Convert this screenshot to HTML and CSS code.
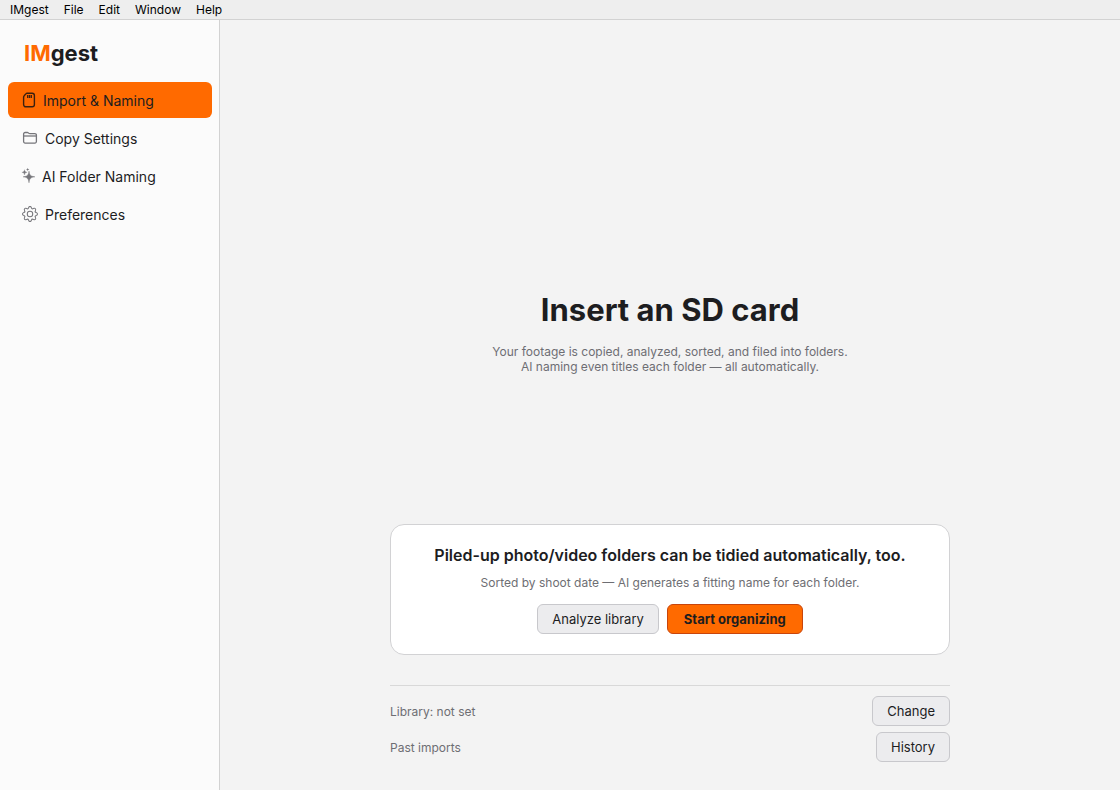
FILE: index.html
```html
<!DOCTYPE html>
<html lang="en">
<head>
  <meta charset="UTF-8" />
  <meta name="viewport" content="width=device-width, initial-scale=1.0"/>
  <title>IMgest</title>
  <link rel="stylesheet" href="styles.css">
</head>
<body>

<!-- Menu bar -->
<header class="menubar">
  <button type="button">IMgest</button>
  <button type="button">File</button>
  <button type="button">Edit</button>
  <button type="button">Window</button>
  <button type="button">Help</button>
</header>

<div class="app">

  <!-- Sidebar -->
  <aside class="sidebar">
    <div class="logo"><span>IM</span>gest</div>
    <nav class="nav">
      <a class="nav-item active" href="#import">
        <svg width="14" height="16" viewBox="0 0 14 16" fill="none" stroke="currentColor" stroke-width="1.4">
          <path d="M5.2 1.2h5a2.200 2.200 0 0 1 2.200 2.200v9.200a2.200 2.200 0 0 1-2.200 2.200H3.800a2.200 2.200 0 0 1-2.200-2.200V5.200c0-.6.2-1 .6-1.400l1.600-1.900c.4-.5.800-.7 1.400-.7z"/>
          <path d="M5.700 3v3M7.500 3v3M9.300 3v3" stroke-width="1.300"/>
        </svg>
        Import &amp; Naming
      </a>
      <a class="nav-item" href="#copy">
        <svg width="16" height="16" viewBox="0 0 16 16" fill="none" stroke="currentColor" stroke-width="1.300">
          <path d="M1.600 11.600V4a1.500 1.500 0 0 1 1.500-1.500h2.200c.5 0 .8.100 1.100.4l.5.400c.3.200.6.300 1 .3h5a1.500 1.500 0 0 1 1.500 1.500v6.500a1.500 1.500 0 0 1-1.500 1.500H3.100a1.500 1.500 0 0 1-1.500-1.500z"/>
          <path d="M1.600 6h12.800"/>
        </svg>
        Copy Settings
      </a>
      <a class="nav-item" href="#ai">
        <svg width="13" height="16" viewBox="0 0 13 16" fill="currentColor">
          <path d="M7 3.200c.5 3.900 1.600 5.100 5.800 5.600-4.200.6-5.300 1.800-5.800 5.900-.5-4.100-1.600-5.300-5.800-5.900C5.400 8.300 6.500 7.100 7 3.200z" stroke="currentColor" stroke-width=".5"/>
          <path d="M2.500 1.700c.2 1.700.9 2.400 2.600 2.600-1.700.3-2.400 1-2.600 2.700-.2-1.700-.9-2.400-2.600-2.700 1.700-.2 2.400-.9 2.600-2.600z" stroke="currentColor" stroke-width=".3"/>
          <path d="M5.700-.2c.2 1.100.6 1.500 1.700 1.700-1.100.2-1.500.6-1.700 1.700-.2-1.100-.6-1.500-1.700-1.700C5.100 1.300 5.500.9 5.700-.2z"/>
        </svg>
        AI Folder Naming
      </a>
      <a class="nav-item" href="#preferences">
        <svg width="16" height="16" viewBox="0 0 16 16" fill="currentColor">
          <path d="M8 4.754a3.246 3.246 0 1 0 0 6.492 3.246 3.246 0 0 0 0-6.492M5.754 8a2.246 2.246 0 1 1 4.492 0 2.246 2.246 0 0 1-4.492 0"/>
          <path d="M9.796 1.343c-.527-1.790-3.065-1.790-3.592 0l-.094.319a.873.873 0 0 1-1.255.52l-.292-.16c-1.640-.892-3.433.902-2.540 2.541l.159.292a.873.873 0 0 1-.52 1.255l-.319.094c-1.790.527-1.790 3.065 0 3.592l.319.094a.873.873 0 0 1 .52 1.255l-.16.292c-.892 1.640.901 3.434 2.541 2.540l.292-.159a.873.873 0 0 1 1.255.52l.094.319c.527 1.790 3.065 1.790 3.592 0l.094-.319a.873.873 0 0 1 1.255-.52l.292.16c1.640.893 3.434-.902 2.540-2.541l-.159-.292a.873.873 0 0 1 .52-1.255l.319-.094c1.790-.527 1.790-3.065 0-3.592l-.319-.094a.873.873 0 0 1-.52-1.255l.16-.292c.893-1.640-.902-3.433-2.541-2.540l-.292.159a.873.873 0 0 1-1.255-.52zm-2.633.283c.246-.835 1.428-.835 1.674 0l.094.319a1.873 1.873 0 0 0 2.693 1.115l.291-.16c.764-.415 1.600.42 1.184 1.185l-.159.292a1.873 1.873 0 0 0 1.116 2.692l.318.094c.835.246.835 1.428 0 1.674l-.319.094a1.873 1.873 0 0 0-1.115 2.693l.16.291c.415.764-.42 1.600-1.185 1.184l-.291-.159a1.873 1.873 0 0 0-2.693 1.116l-.094.318c-.246.835-1.428.835-1.674 0l-.094-.319a1.873 1.873 0 0 0-2.692-1.115l-.292.16c-.764.415-1.600-.42-1.184-1.185l.159-.291A1.873 1.873 0 0 0 1.945 8.930l-.319-.094c-.835-.246-.835-1.428 0-1.674l.319-.094A1.873 1.873 0 0 0 3.060 4.377l-.16-.292c-.415-.764.42-1.600 1.185-1.184l.292.159a1.873 1.873 0 0 0 2.692-1.115z"/>
        </svg>
        Preferences
      </a>
    </nav>
  </aside>

  <!-- Main area -->
  <main class="main">
    <section class="hero">
      <h1>Insert an SD card</h1>
      <p>Your footage is copied, analyzed, sorted, and filed into folders.<br>
        AI naming even titles each folder — all automatically.</p>
    </section>

    <section class="card">
      <h2>Piled-up photo/video folders can be tidied automatically, too.</h2>
      <p>Sorted by shoot date — AI generates a fitting name for each folder.</p>
      <div class="card-actions">
        <button type="button" class="btn">Analyze library</button>
        <button type="button" class="btn btn-primary">Start organizing</button>
      </div>
    </section>

    <footer class="footer">
      <div class="footer-row">
        <span>Library: not set</span>
        <button type="button" class="btn">Change</button>
      </div>
      <div class="footer-row">
        <span>Past imports</span>
        <button type="button" class="btn">History</button>
      </div>
    </footer>
  </main>

</div>

</body>
</html>
```

FILE: styles.css
```css
* { box-sizing: border-box; }

body {
  margin: 0;
  min-height: 100vh;
  display: flex;
  flex-direction: column;
  font-family: Inter, "Liberation Sans", sans-serif;
  font-size: 13px;
  color: #1d1d1f;
  background: #f3f3f3;
}

h1, h2, p { margin: 0; }
button { font-family: inherit; color: inherit; cursor: pointer; }

/* Menu bar */
.menubar {
  display: flex;
  gap: 15px;
  padding: 0 10px;
  background: #eee;
  border-bottom: 1px solid #d2d2d2;
}

.menubar button {
  padding: 0;
  border: 0;
  background: none;
  font-size: 12px;
  line-height: 19px;
  color: #000;
}

.app { flex: 1; display: flex; }

/* Sidebar */
.sidebar {
  width: 220px;
  flex-shrink: 0;
  padding: 18px 7px 0 8px;
  background: #fbfbfb;
  border-right: 1px solid #d2d2d2;
}

.logo {
  padding: 0 16px;
  margin-bottom: 14px;
  font-size: 22px;
  font-weight: 700;
  line-height: 30px;
}

.logo span { color: #ff6a00; }

.nav {
  display: flex;
  flex-direction: column;
  gap: 2px;
}

.nav-item {
  display: flex;
  align-items: center;
  gap: 7px;
  height: 36px;
  padding: 0 14px;
  border-radius: 6px;
  font-size: 14px;
  color: #1d1d1f;
  text-decoration: none;
}

.nav-item svg { color: #76767b; overflow: visible; }
.nav-item.active { background: #ff6a00; }
.nav-item.active svg { color: #3a2010; }

/* Main area */
.main {
  flex: 1;
  display: flex;
  flex-direction: column;
  align-items: center;
  padding: 0 24px 28px;
}

.hero {
  flex: 1;
  display: flex;
  flex-direction: column;
  justify-content: center;
  gap: 14px;
  padding-top: 120px;
  text-align: center;
}

.hero h1 {
  font-size: 31px;
  font-weight: 700;
  line-height: 40px;
}

.hero p, .card p, .footer-row span {
  font-size: 12px;
  line-height: 15px;
  color: #6e6e73;
}

.card {
  width: 100%;
  max-width: 560px;
  padding: 20px;
  text-align: center;
  background: #fff;
  border: 1px solid #d2d2d4;
  border-radius: 14px;
}

.card h2 {
  margin-bottom: 10px;
  font-size: 16px;
  font-weight: 600;
  line-height: 20px;
}

.card-actions {
  display: flex;
  justify-content: center;
  gap: 8px;
  margin-top: 14px;
}

.btn {
  height: 30px;
  padding: 0 14px;
  font-size: 13px;
  background: #ececee;
  border: 1px solid #c8c8cc;
  border-radius: 6px;
}

.btn-primary {
  padding: 0 16px;
  font-weight: 700;
  background: #ff6a00;
  border-color: #c8450c;
}

/* Footer */
.footer {
  display: flex;
  flex-direction: column;
  gap: 6px;
  width: 100%;
  max-width: 560px;
  margin-top: 30px;
  padding-top: 10px;
  border-top: 1px solid #d8d8d8;
}

.footer-row {
  display: flex;
  align-items: center;
  justify-content: space-between;
}
```
